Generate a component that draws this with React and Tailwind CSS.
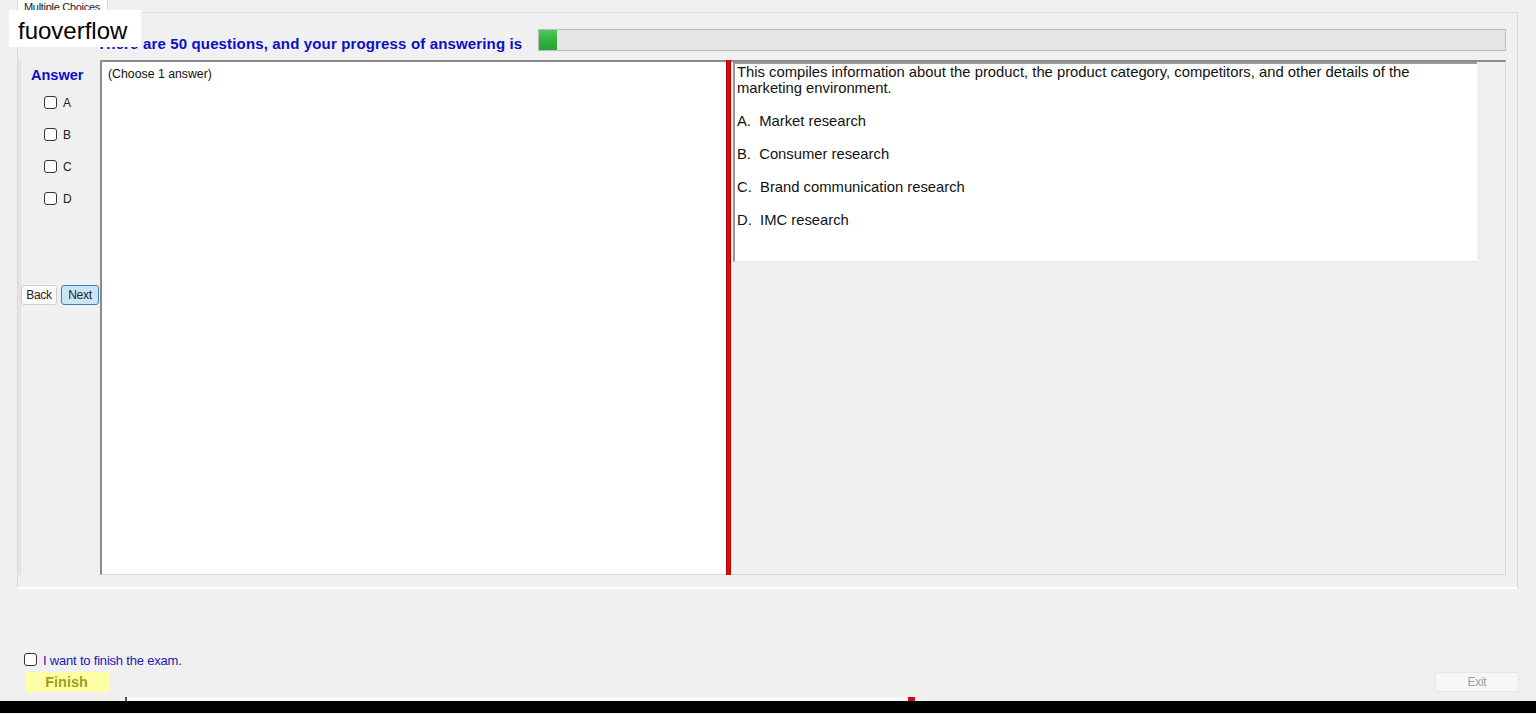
import React from 'react';

const Box = ({ label }) => (
  <label className="flex items-center gap-[6px] h-[13px] text-[12px] text-[#222]">
    <span className="w-[13px] h-[13px] border border-[#333] rounded-[3px] bg-white" />
    {label}
  </label>
);

const options = ['A.  Market research', 'B.  Consumer research', 'C.  Brand communication research', 'D.  IMC research'];

export default function App() {
  return (
    <div className="relative w-[1536px] h-[714px] overflow-hidden bg-[#f0f0f0] font-['Liberation_Sans',Arial,sans-serif] text-black">
      {/* tab header */}
      <div className="h-[12px] pl-[17px] flex">
        <div className="w-[91px] h-[12px] bg-[#fcfcfc] border-x border-[#dadada] overflow-hidden text-[11px] leading-[14px] pl-[6px] text-[#222] tracking-[-0.3px]">
          Multiple Choices
        </div>
      </div>

      {/* tab page */}
      <div className="ml-[17px] w-[1501px] h-[577px] border border-[#dcdcdc] border-b-2 border-b-white flex flex-col">
        <div className="flex items-center h-[22px] mt-[16px]">
          <div className="w-[79px] shrink-0" />
          <div className="w-[441px] text-[15px] font-bold text-[#0a0fc8] leading-[22px] pt-[7px] tracking-[0.15px] whitespace-nowrap">
            There are 50 questions, and your progress of answering is
          </div>
          <div className="w-[968px] h-[22px] bg-[#e6e6e6] border border-[#bcbcbc] flex">
            <div className="w-[18px] h-full bg-gradient-to-b from-[#4fc95a] via-[#2fb43c] to-[#27a534]" />
          </div>
        </div>

        <div className="flex mt-[9px] h-[515px] pr-[11px]">
          {/* sidebar */}
          <div className="w-[82px] shrink-0 border-l-[3px] border-[#e3e3e3] flex flex-col">
            <div className="pl-[10px] pt-[8px] text-[14.5px] font-bold text-[#0a0fc8] leading-[14px]">Answer</div>
            <div className="flex flex-col gap-[19px] pl-[23px] mt-[14px]">
              <Box label="A" />
              <Box label="B" />
              <Box label="C" />
              <Box label="D" />
            </div>
            <div className="flex gap-[4px] mt-[80px]">
              <button className="w-[36px] h-[20px] bg-[#fdfdfd] border border-[#cfcfcf] rounded-[3px] text-[12px] text-[#222] tracking-[-0.3px]">Back</button>
              <button className="w-[38px] h-[20px] bg-[#cce4f7] border border-[#3d7fb8] rounded-[3px] text-[12px] text-[#222] tracking-[-0.3px]">Next</button>
            </div>
          </div>

          {/* answer panel */}
          <div className="w-[626px] shrink-0 bg-white border-l-2 border-t-2 border-[#8a8a8a] border-b border-b-[#d8d8d8] pl-[6px] pt-[5px] text-[12.3px] leading-[14px] text-[#111]">
            (Choose 1 answer)
          </div>

          {/* splitter */}
          <div className="w-[5px] shrink-0 bg-[#e10b0b] border-x border-[#b00000]" />

          {/* question panel */}
          <div className="flex-1 border-t-2 border-[#8c8c8c] border-b border-b-[#d8d8d8] border-r border-r-[#d8d8d8] pl-[2px] pr-[28px]">
            <div className="h-[200px] bg-white border-l-2 border-t-2 border-[#9a9a9a] border-b border-b-[#e4e4e4] pl-[2px] text-[14.8px] leading-[16px] text-[#111]">
              <p>
                This compiles information about the product, the product category, competitors, and other details of the
                <br />
                marketing environment.
              </p>
              <div className="flex flex-col gap-[17px] mt-[17px]">
                {options.map((o) => (
                  <p key={o} className="whitespace-pre">{o}</p>
                ))}
              </div>
            </div>
          </div>
        </div>
      </div>

      {/* finish area */}
      <div className="mt-[63px] pl-[24px] flex items-center gap-[6px] h-[14px]">
        <span className="w-[13px] h-[13px] border border-[#333] rounded-[3px] bg-white" />
        <span className="text-[13px] text-[#1a1ab0] tracking-[-0.2px] pt-[3px]">I want to finish the exam.</span>
      </div>
      <div className="flex justify-between items-center mt-[6px] h-[20px] pl-[26px] pr-[17px]">
        <button className="w-[83px] h-[20px] bg-[#ffffa8] text-[14.5px] font-bold text-[#a0a018] pr-[2px]">Finish</button>
        <button className="w-[84px] h-[20px] bg-[#f7f7f7] border border-[#e6e6e6] rounded-[3px] text-[12px] text-[#9c9c9c] tracking-[-0.3px]">Exit</button>
      </div>

      <div className="mt-[5px] flex h-[4px] pl-[125px]">
        <div className="w-[2px] bg-[#555]" />
        <div className="w-[781px] bg-[#f8f8f8]" />
        <div className="w-[7px] bg-[#c01010]" />
      </div>
      <div className="h-[12px] bg-black" />

      {/* watermark */}
      <div className="absolute left-[9px] top-[10px] w-[132px] h-[37px] bg-white pl-[9px] text-[24px] leading-[42px] text-black">
        fuoverflow
      </div>
    </div>
  );
}
